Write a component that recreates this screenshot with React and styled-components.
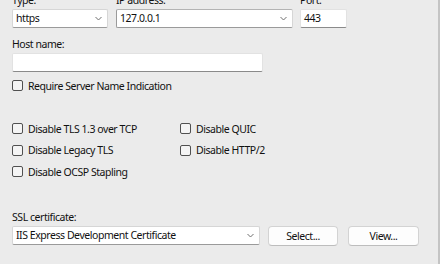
import styled, { createGlobalStyle } from "styled-components";

const GlobalStyle = createGlobalStyle`
  html, body {
    margin: 0;
    padding: 0;
    background: #ebebeb;
  }
  body {
    font-family: "Noto Sans", "Open Sans", sans-serif;
    font-size: 10.5px;
    letter-spacing: -0.45px;
    color: #111;
  }
`;

const Page = styled.div`
  width: 440px;
  height: 264px;
  box-sizing: border-box;
  border-right: 2px solid #c4c4c4;
  padding-left: 12px;
  overflow: hidden;
`;

const TopRow = styled.div`
  display: flex;
  gap: 8px;
  margin-top: -7px;
`;

const Field = styled.div`
  display: flex;
  flex-direction: column;
  width: ${(p) => p.width}px;
`;

const Label = styled.div`
  line-height: 15px;
  height: 15px;
  margin-bottom: 1px;
  white-space: nowrap;
`;

const Input = styled.div`
  box-sizing: border-box;
  height: 19px;
  width: ${(p) => (p.width ? p.width + "px" : "100%")};
  background: #ffffff;
  border: 1px solid #e2e2e2;
  border-bottom-color: #8a8a8a;
  border-radius: 2px;
  padding: 0 3px;
  line-height: 17px;
  display: flex;
  align-items: center;
  justify-content: space-between;
  white-space: nowrap;
`;

const Combo = styled(Input)`
  border-color: #d6d6d6;
  border-bottom-color: #9a9a9a;
  padding-right: 5px;
`;

const Chevron = () => (
  <svg width="7" height="5" viewBox="0 0 7 5">
    <polyline points="0.5,1 3.5,4 6.5,1" fill="none" stroke="#707070" strokeWidth="1" />
  </svg>
);

const Section = styled.div`
  margin-top: ${(p) => p.top}px;
`;

const CheckRow = styled.label`
  display: flex;
  align-items: center;
  gap: 5px;
  height: 15px;
  white-space: nowrap;
`;

const Box = styled.span`
  box-sizing: border-box;
  width: 11px;
  height: 11px;
  border: 1px solid #505050;
  border-radius: 2px;
  background: #f4f4f4;
  flex: none;
`;

const CheckGrid = styled.div`
  display: grid;
  grid-template-columns: 168px auto;
  row-gap: 6.5px;
`;

const BottomRow = styled.div`
  display: flex;
  align-items: flex-start;
  gap: 8px;
`;

const Button = styled.div`
  box-sizing: border-box;
  width: ${(p) => p.width}px;
  height: 20px;
  background: #fdfdfd;
  border: 1px solid #d3d3d3;
  border-bottom-color: #bdbdbd;
  border-radius: 4px;
  display: flex;
  align-items: center;
  justify-content: center;
`;

const Check = ({ children }) => (
  <CheckRow>
    <Box />
    {children}
  </CheckRow>
);

export default function App() {
  return (
    <Page>
      <GlobalStyle />
      <TopRow>
        <Field width={96}>
          <Label>Type:</Label>
          <Combo>
            https
            <Chevron />
          </Combo>
        </Field>
        <Field width={177}>
          <Label>IP address:</Label>
          <Combo style={{ borderLeftColor: "#9a9a9a", borderTopColor: "#b4b4b4" }}>
            127.0.0.1
            <Chevron />
          </Combo>
        </Field>
        <Field width={47} style={{ marginLeft: -1 }}>
          <Label>Port:</Label>
          <Input>443</Input>
        </Field>
      </TopRow>

      <Section top={9}>
        <Label>Host name:</Label>
        <Input width={251} />
      </Section>

      <Section top={6}>
        <Check>Require Server Name Indication</Check>
      </Section>

      <Section top={28}>
        <CheckGrid>
          <Check>Disable TLS 1.3 over TCP</Check>
          <Check>Disable QUIC</Check>
          <Check>Disable Legacy TLS</Check>
          <Check>Disable HTTP/2</Check>
          <Check>Disable OCSP Stapling</Check>
        </CheckGrid>
      </Section>

      <Section top={31}>
        <Label>SSL certificate:</Label>
        <BottomRow>
          <Combo width={248}>
            IIS Express Development Certificate
            <Chevron />
          </Combo>
          <Button width={70}>Select...</Button>
          <Button width={71} style={{ marginLeft: 2 }}>
            View...
          </Button>
        </BottomRow>
      </Section>
    </Page>
  );
}
